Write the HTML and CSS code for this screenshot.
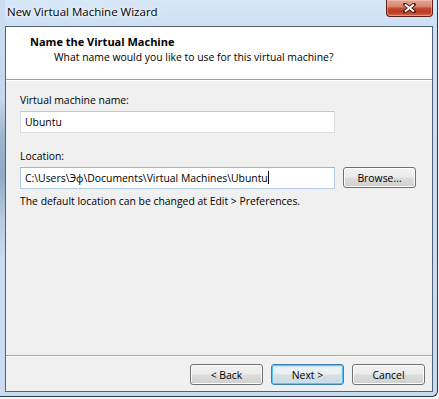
FILE: index.html
```html
<!DOCTYPE html>
<html lang="en">
<head>
    <meta charset="UTF-8">
    <title>New Virtual Machine Wizard</title>
    <link rel="stylesheet" href="styles.css">
</head>
<body>
    <div class="window">
        <div class="titlebar">
            <span class="title">New Virtual Machine Wizard</span>
            <button class="close-btn" title="Close">
                <svg width="13" height="10" viewBox="0 0 13 10">
                    <path d="M2 1.5 L11 8.5 M11 1.5 L2 8.5" stroke="#4a1a12" stroke-width="3.6" stroke-linecap="square"/>
                    <path d="M2 1.5 L11 8.5 M11 1.5 L2 8.5" stroke="#fff" stroke-width="2"/>
                </svg>
            </button>
        </div>

        <div class="client">
            <div class="header">
                <h1>Name the Virtual Machine</h1>
                <p>What name would you like to use for this virtual machine?</p>
            </div>

            <div class="content">
                <label>Virtual machine name:</label>
                <div class="textbox name-box">Ubuntu</div>

                <label>Location:</label>
                <div class="location-row">
                    <div class="textbox focused">C:\Users\Эф\Documents\Virtual Machines\Ubuntu<span class="caret"></span></div>
                    <button class="btn">Browse...</button>
                </div>

                <p class="hint">The default location can be changed at Edit &gt; Preferences.</p>
            </div>

            <div class="footer">
                <button class="btn">&lt; Back</button>
                <button class="btn default">Next &gt;</button>
                <button class="btn">Cancel</button>
            </div>
        </div>
    </div>
</body>
</html>
```

FILE: styles.css
```css
* {
    margin: 0;
    padding: 0;
    box-sizing: border-box;
}

body {
    background: #f4f6f8;
    font-family: 'Open Sans', 'Noto Sans', sans-serif;
    font-size: 10.4px;
    color: #000;
}

/* Aero window frame */
.window {
    width: 438px;
    height: 397px;
    display: flex;
    flex-direction: column;
    padding: 0 4px 4px 5px;
    border-right: 1px solid #2e3947;
    border-bottom: 1px solid #2e3947;
    border-bottom-right-radius: 6px;
    background:
        linear-gradient(#cbddf1 0, #c4d7ec 100px, #9fb6cf 135px, #91a9c4 175px, #b4c9e0 215px, #c8dbf0 260px) left top / 5px 100% no-repeat,
        linear-gradient(#d8e7f7, #cde0f3 26px, #c7dbf1);
}

.titlebar {
    height: 26px;
    display: flex;
    justify-content: space-between;
    align-items: flex-start;
}

.title {
    padding: 4px 0 0 2px;
    font-size: 11.5px;
    line-height: 16px;
    text-shadow: 0 0 6px #fff, 0 0 3px #fff;
}

.close-btn {
    width: 47px;
    height: 17px;
    display: flex;
    align-items: center;
    justify-content: center;
    border: 1px solid #5b2016;
    border-top: none;
    border-radius: 0 0 4px 4px;
    background: linear-gradient(#e6a596 0%, #d88876 40%, #c5492f 52%, #b83b22 75%, #d3694f 100%);
    box-shadow: inset 0 0 0 1px rgba(255, 210, 200, 0.45);
}

/* Client area */
.client {
    flex: 1;
    display: flex;
    flex-direction: column;
    border: 1px solid #56616e;
    background: #f0f0f0;
}

.header {
    height: 53px;
    padding: 7px 0 0 24px;
    background: #fff;
    border-bottom: 1px solid #a0a0a0;
}

.header h1 {
    font-size: 11px;
    font-weight: 700;
    line-height: 15px;
}

.header p {
    padding-left: 24px;
    margin-top: 1px;
    line-height: 15px;
}

.content {
    flex: 1;
    padding: 12px 14px 0;
    box-shadow: inset 0 1px 0 #fff;
}

label {
    display: block;
    line-height: 16px;
    margin-bottom: 3px;
}

.textbox {
    width: 315px;
    height: 22px;
    padding: 0 4px;
    line-height: 20px;
    background: #fff;
    border: 1px solid #dadde3;
    border-top-color: #c3c6cc;
}

.name-box {
    margin-bottom: 15px;
}

.textbox.focused {
    border-color: #b3cde6;
    border-top-color: #94b6d8;
}

.caret {
    display: inline-block;
    width: 1px;
    height: 13px;
    background: #000;
    vertical-align: -2px;
}

.location-row {
    display: flex;
    align-items: flex-start;
    gap: 8px;
}

.hint {
    margin-top: 4px;
    line-height: 16px;
}

.footer {
    height: 36px;
    display: flex;
    justify-content: flex-end;
    gap: 8px;
    padding: 8px 7px 0 0;
    border-top: 1px solid #a0a0a0;
    box-shadow: inset 0 1px 0 #fff;
}

/* Win7 push buttons */
.btn {
    width: 73px;
    height: 21px;
    font-family: inherit;
    font-size: inherit;
    color: #000;
    border: 1px solid #707070;
    border-radius: 3px;
    background: linear-gradient(#f2f2f2 0%, #ebebeb 48%, #dddddd 52%, #cfcfcf 100%);
    box-shadow: inset 0 0 0 1px #fcfcfc;
}

.btn.default {
    border-color: #3c7fb1;
    background: linear-gradient(#f2f5f7 0%, #e9eef1 48%, #d9e1e6 52%, #cdd7de 100%);
    box-shadow: inset 0 0 0 1px #5ec3f2, inset 0 0 2px 2px #c4e7f8;
}
```
